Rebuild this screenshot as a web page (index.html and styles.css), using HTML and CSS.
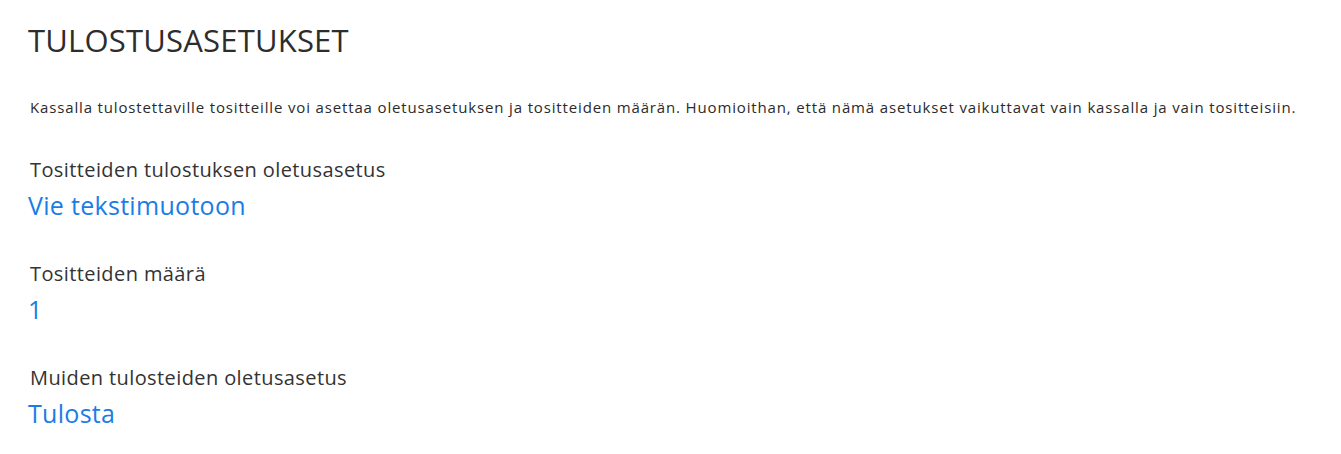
FILE: index.html
```html
<!DOCTYPE html>
<html lang="fi">
<head>
<meta charset="utf-8">
<title>Tulostusasetukset</title>
<link rel="stylesheet" href="styles.css">
</head>
<body>
<main class="page">
  <h1 class="title">TULOSTUSASETUKSET</h1>
  <p class="intro">Kassalla tulostettaville tositteille voi asettaa oletusasetuksen ja tositteiden määrän. Huomioithan, että nämä asetukset vaikuttavat vain kassalla ja vain tositteisiin.</p>
  <section class="setting">
    <div class="label">Tositteiden tulostuksen oletusasetus</div>
    <a class="value" href="#">Vie tekstimuotoon</a>
  </section>
  <section class="setting">
    <div class="label">Tositteiden määrä</div>
    <a class="value" href="#">1</a>
  </section>
  <section class="setting">
    <div class="label">Muiden tulosteiden oletusasetus</div>
    <a class="value" href="#">Tulosta</a>
  </section>
</main>
</body>
</html>
```
FILE: styles.css
```css
html, body {
  margin: 0;
  padding: 0;
  background: #ffffff;
}
body {
  font-family: "Open Sans", "Noto Sans", "Liberation Sans", sans-serif;
  color: #333333;
}
.page {
  padding: 20px 28px 0 28px;
}
.title {
  margin: 0;
  font-size: 31px;
  font-weight: 400;
  line-height: 40px;
  letter-spacing: 0.2px;
  color: #2d2d2d;
}
.intro {
  margin: 36px 0 0 2px;
  font-size: 15px;
  line-height: 22px;
  letter-spacing: 0.85px;
  color: #2b2b2b;
}
.setting {
  display: flex;
  flex-direction: column;
  align-items: flex-start;
  margin-top: 37px;
}
.setting + .setting {
  margin-top: 32px;
}
.label {
  padding-left: 2px;
  font-size: 20px;
  line-height: 30px;
  letter-spacing: 0.4px;
}
.value {
  font-size: 25px;
  line-height: 40px;
  padding-bottom: 2px;
  letter-spacing: 0.3px;
  color: #1a7de6;
  text-decoration: none;
}
```
